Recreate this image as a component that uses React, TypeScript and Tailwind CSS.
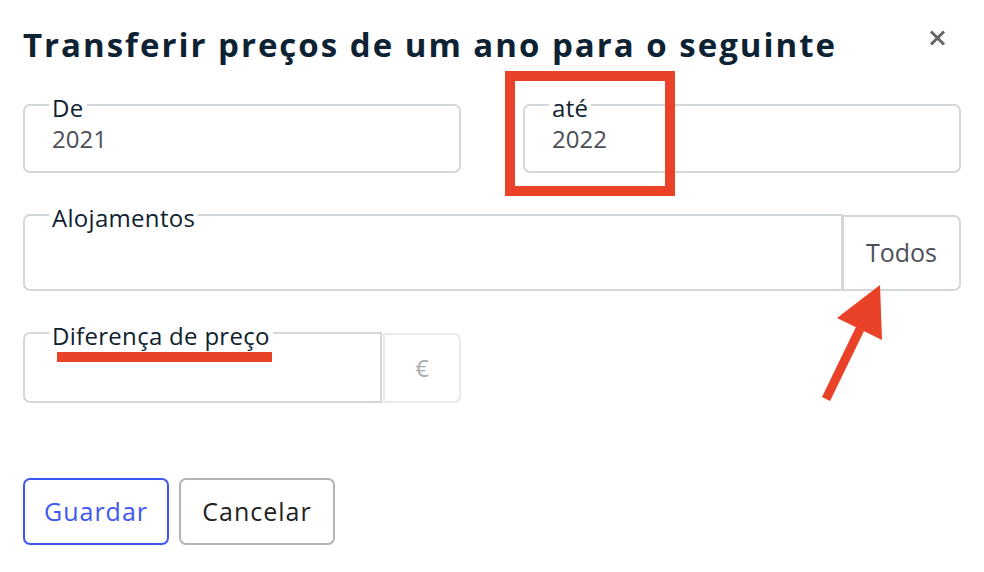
import React from 'react'

const font = { fontFamily: '"Open Sans", Lato, sans-serif' }

function Field({ label, value, className }: { label: string; value?: string; className?: string }) {
    return (
        <fieldset className={`m-0 min-w-0 border-2 border-[#d3d7dc] pl-[24px] pr-3 pt-[5px] ${className ?? ''}`}>
            <legend className="px-[3px] pt-[6px] text-[24px] leading-[24px] tracking-[0.3px] text-[#0f2230]">
                {label}
            </legend>
            {value && <div className="pl-[3px] text-[24px] leading-[28px] text-[#4b5057]">{value}</div>}
        </fieldset>
    )
}

export default function App() {
    return (
        <div className="relative h-[572px] w-[984px] overflow-hidden bg-white px-[23px]" style={font}>
            {/* header */}
            <div className="flex items-start justify-between pt-[25px]">
                <h1 className="text-[33px] font-bold leading-[40px] tracking-[2px] text-[#0d2233]">
                    Transferir preços de um ano para o seguinte
                </h1>
                <button className="mr-[15px] mt-[5px]" aria-label="Fechar">
                    <svg width="17" height="16" viewBox="0 0 17 16">
                        <path d="M2 1.5 L15 14.5 M15 1.5 L2 14.5" stroke="#666" strokeWidth="3" />
                    </svg>
                </button>
            </div>

            {/* years */}
            <div className="mt-[25px] grid grid-cols-2 gap-[62px]">
                <Field label="De" value="2021" className="h-[83px] rounded-[7px]" />
                <Field label="até" value="2022" className="h-[83px] rounded-[7px]" />
            </div>

            {/* accommodations */}
            <div className="mt-[27px] flex items-end">
                <Field label="Alojamentos" className="h-[91px] flex-1 rounded-l-[7px]" />
                <button className="h-[76px] w-[118px] rounded-r-[7px] border-2 border-l border-[#d3d7dc] text-[25px] text-[#4b5057]">
                    Todos
                </button>
            </div>

            {/* price difference */}
            <div className="mt-[27px] flex w-[438px] items-end gap-px">
                <Field label="Diferença de preço" className="h-[85px] w-[359px] rounded-l-[7px]" />
                <div className="flex h-[70px] w-[78px] items-center justify-center rounded-r-[7px] border-2 border-[#e8eaed] text-[24px] text-[#a9adb2]">
                    €
                </div>
            </div>

            {/* actions */}
            <div className="mt-[75px] flex gap-[10px]">
                <button className="h-[67px] w-[146px] rounded-[7px] border-2 border-[#3d57f2] text-[25px] tracking-[1px] text-[#4158f0]">
                    Guardar
                </button>
                <button className="h-[67px] w-[156px] rounded-[7px] border-2 border-[#b4b4b4] text-[25px] tracking-[1px] text-[#222]">
                    Cancelar
                </button>
            </div>

            {/* annotations */}
            <svg className="pointer-events-none absolute inset-0" width="984" height="572">
                <rect x="510" y="76" width="160" height="115" fill="none" stroke="#ea4129" strokeWidth="10" />
                <rect x="57" y="352" width="215" height="10" fill="#ea4129" />
                <line x1="826" y1="399" x2="860" y2="329" stroke="#ea4129" strokeWidth="9" />
                <polygon points="880,285 837,318 882,340" fill="#ea4129" />
            </svg>
        </div>
    )
}
